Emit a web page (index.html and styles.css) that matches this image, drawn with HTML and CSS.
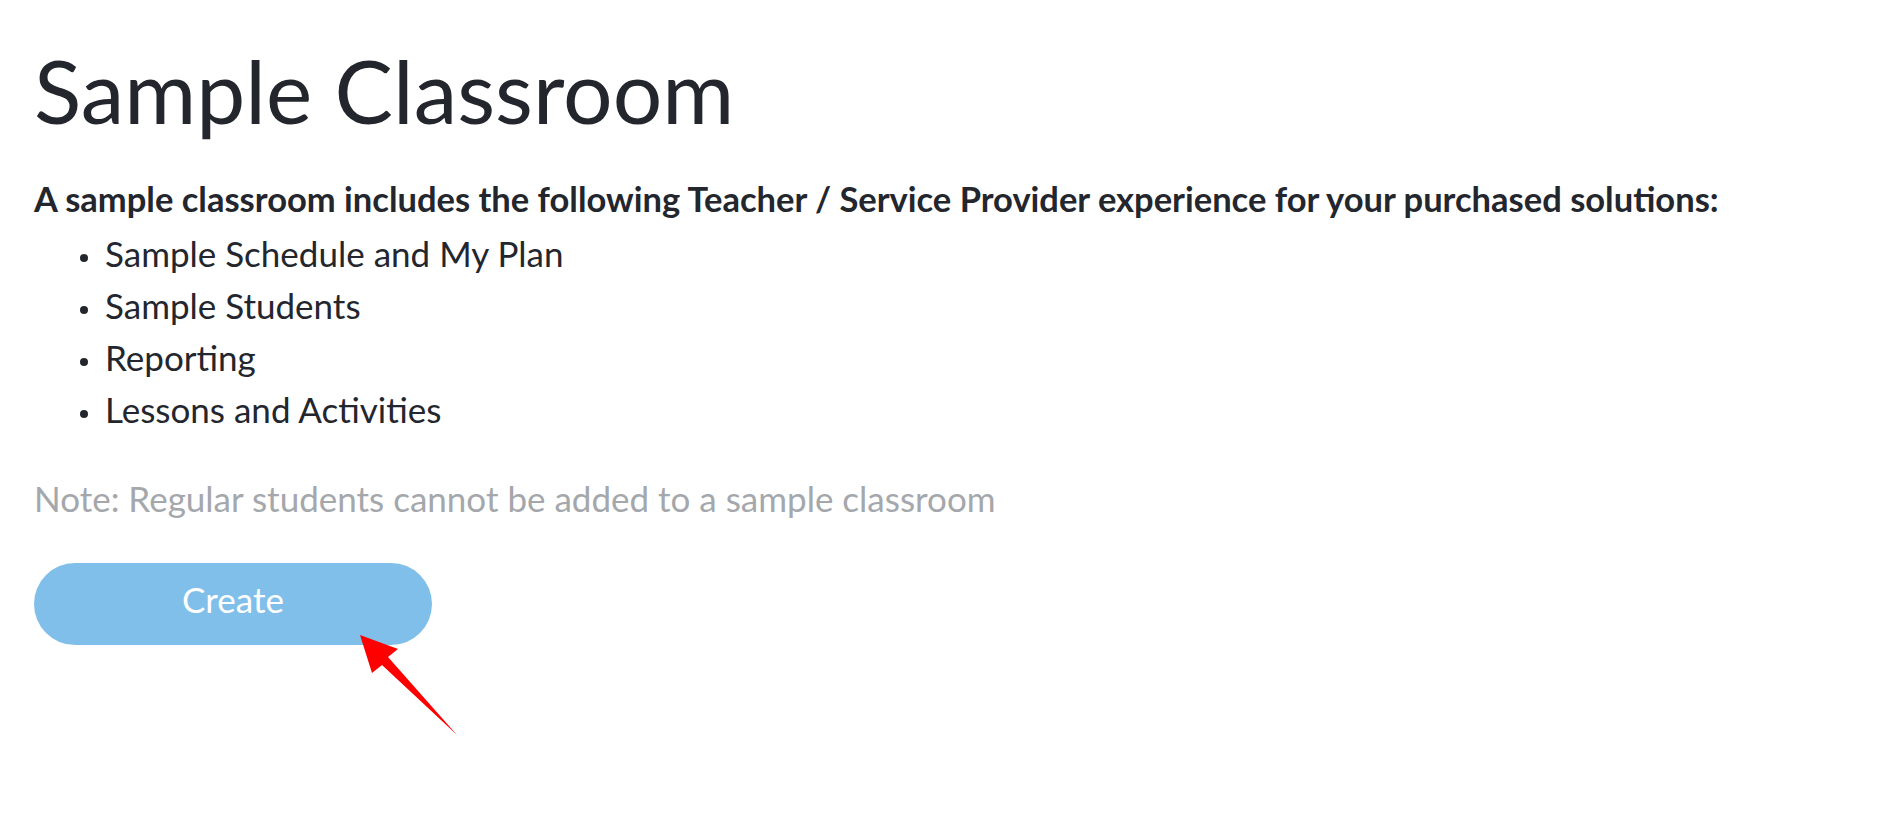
FILE: index.html
```html
<!DOCTYPE html>
<html lang="en">
<head>
<meta charset="utf-8">
<title>Sample Classroom</title>
<link rel="stylesheet" href="styles.css">
</head>
<body>
<main class="page">
  <h1 class="title">Sample Classroom</h1>
  <p class="lead">A sample classroom includes the following Teacher / Service Provider experience for your purchased solutions:</p>
  <ul class="features">
    <li>Sample Schedule and My Plan</li>
    <li>Sample Students</li>
    <li>Reporting</li>
    <li>Lessons and Activities</li>
  </ul>
  <p class="note">Note: Regular students cannot be added to a sample classroom</p>
  <div class="actions">
    <button class="btn-create" type="button">Create</button>
    <svg class="callout-arrow" width="110" height="115" viewBox="0 0 110 115" aria-hidden="true">
      <polygon points="6,10 44,24 34,32 103,110 28,40 18,48" fill="#ff0000"/>
    </svg>
  </div>
</main>
</body>
</html>
```

FILE: styles.css
```css
html, body {
  margin: 0;
  padding: 0;
  background: #ffffff;
}

body {
  font-family: Lato, "Open Sans", "Liberation Sans", sans-serif;
  color: #23262d;
}

.page {
  box-sizing: border-box;
  min-height: 816px;
  padding: 38px 34px 0 34px;
}

.title {
  margin: 0;
  font-size: 87.5px;
  font-weight: 400;
  line-height: 1.2;
  color: #23262d;
}

.lead {
  margin: 30px 0 0 0;
  font-size: 34.5px;
  font-weight: 700;
  line-height: 52px;
}

.features {
  margin: 2px 0 0 0;
  padding: 0 0 0 71px;
  list-style: none;
  font-size: 35px;
  line-height: 52px;
}

.features li::before {
  content: "";
  display: inline-block;
  width: 8px;
  height: 8px;
  border-radius: 50%;
  background: currentColor;
  vertical-align: 5px;
  margin-left: -25px;
  margin-right: 17px;
}

.note {
  margin: 37px 0 0 0;
  font-size: 35px;
  line-height: 52px;
  color: #a4a7ab;
}

.actions {
  position: relative;
  margin-top: 38.5px;
  padding-bottom: 120px;
}

.btn-create {
  display: block;
  box-sizing: border-box;
  width: 398px;
  height: 82px;
  border: none;
  border-radius: 41px;
  background: #80bfea;
  color: #ffffff;
  font-family: Lato, "Open Sans", "Liberation Sans", sans-serif;
  font-size: 35px;
  font-weight: 400;
  padding: 0 0 9px 0;
}

.callout-arrow {
  position: absolute;
  left: 320px;
  top: 62px;
}
```
